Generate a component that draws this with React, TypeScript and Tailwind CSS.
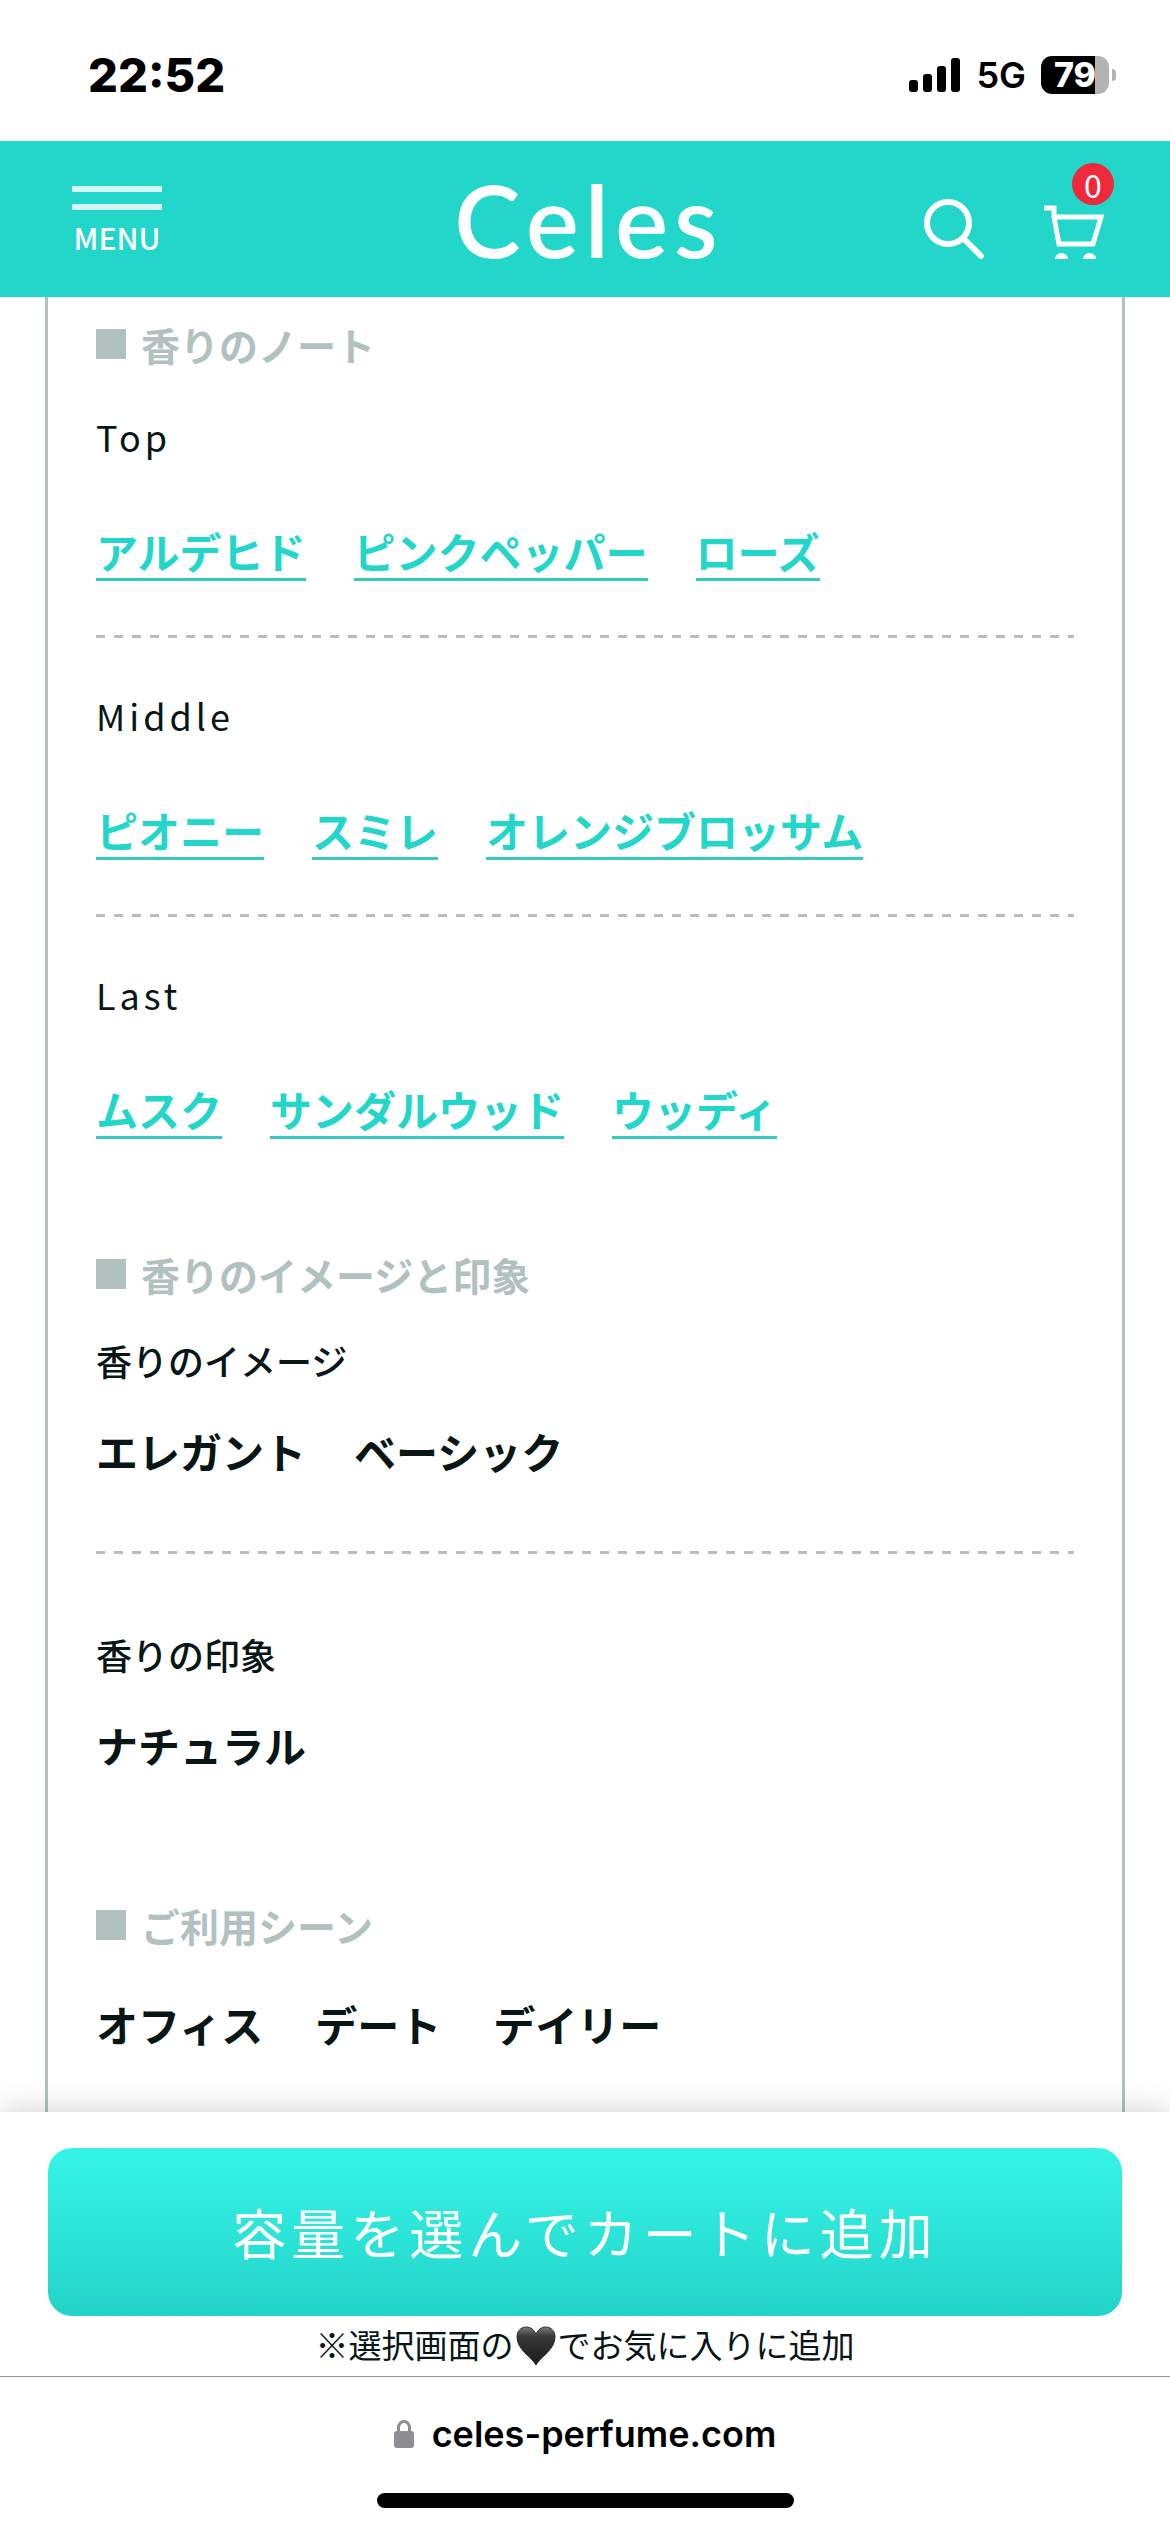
import React from "react";

const notes = [
  { name: "Top", items: ["アルデヒド", "ピンクペッパー", "ローズ"] },
  { name: "Middle", items: ["ピオニー", "スミレ", "オレンジブロッサム"] },
  { name: "Last", items: ["ムスク", "サンダルウッド", "ウッディ"] },
];

function StatusBar() {
  return (
    <div className="flex h-[141px] items-center justify-between pt-2 pl-[88px] pr-[54px] font-[Inter,sans-serif] text-black">
      <span className="text-[47px] leading-none font-extrabold">22:52</span>
      <div className="flex items-center gap-[15px]">
        <svg width="52" height="34" viewBox="0 0 52 34" aria-hidden="true">
          <rect x="0" y="22" width="9" height="12" rx="3" />
          <rect x="14" y="16" width="9" height="18" rx="3" />
          <rect x="28" y="8" width="9" height="26" rx="3" />
          <rect x="42" y="0" width="9" height="34" rx="3" />
        </svg>
        <span className="text-[36px] leading-none font-semibold">5G</span>
        <div className="flex items-center gap-[3px]">
          <div className="flex h-[38px] w-[68px] items-center justify-center rounded-[11px] bg-[linear-gradient(90deg,#000_79%,#b3b3b3_79%)] text-[34px] leading-none font-extrabold text-white">
            79
          </div>
          <div className="h-3 w-1 rounded-r-full bg-[#b3b3b3]" />
        </div>
      </div>
    </div>
  );
}

function Header() {
  return (
    <header className="grid h-[156px] grid-cols-[1fr_auto_1fr] items-center bg-[#22d6ca] pl-[72px] pr-16 text-white">
      <button className="flex w-[90px] flex-col items-center">
        <span className="h-[6px] w-full bg-white/80" />
        <span className="mt-3 h-[6px] w-full bg-white/80" />
        <span className="mt-3 text-[30px] leading-[30px] font-medium">MENU</span>
      </button>
      <a href="#" className="font-[Lato,sans-serif] text-[100px] leading-none font-semibold tracking-[6px]">
        Celes
      </a>
      <div className="flex items-center justify-end gap-[57px] pt-[22px]">
        <button aria-label="検索">
          <svg width="62" height="62" viewBox="0 0 62 62" fill="none" stroke="currentColor" strokeWidth="6" strokeLinecap="round">
            <circle cx="25" cy="24" r="21" />
            <path d="M41 40 58 57" />
          </svg>
        </button>
        <a href="#" aria-label="カート" className="relative">
          <svg width="64" height="62" viewBox="0 0 64 62" fill="none" stroke="currentColor" strokeWidth="5">
            <path d="M2 9h10v9l5 27h34l8-27H12" />
            <path d="M13 60a6.500 6 0 0 1 13 0zM41 60a6.500 6 0 0 1 13 0z" fill="currentColor" stroke="none" />
          </svg>
          <span className="absolute -top-9 -right-2 flex size-[42px] items-center justify-center rounded-full bg-[#f0283c] text-[32px] leading-none">
            0
          </span>
        </a>
      </div>
    </header>
  );
}

function SectionTitle({ children }: { children: React.ReactNode }) {
  return (
    <h2 className="flex items-center gap-[15px] text-[39px] leading-10 font-bold text-[#b1c1bf]">
      <span className="size-[30px] bg-[#b1c1bf]" />
      {children}
    </h2>
  );
}

function Divider() {
  return (
    <div className="h-[3px] bg-[repeating-linear-gradient(90deg,#b5c0be_0_9px,transparent_9px_18px)]" />
  );
}

function Trait({ label, values }: { label: string; values: string[] }) {
  return (
    <div>
      <h3 className="text-[36px] leading-[54px] font-medium">{label}</h3>
      <ul className="mt-[37px] flex gap-12 text-[42px] leading-[54px] font-bold">
        {values.map((value) => (
          <li key={value}>{value}</li>
        ))}
      </ul>
    </div>
  );
}

function CartBar() {
  return (
    <div className="relative bg-white px-12 pt-9 pb-1 text-center shadow-[0_0_30px_rgba(0,0,0,0.2)]">
      <button className="h-[168px] w-full rounded-[24px] bg-linear-to-b from-[#36f4e8] to-[#22d4c8] text-[54px] leading-none font-normal tracking-[5px] text-white">
        容量を選んでカートに追加
      </button>
      <p className="flex items-center justify-center gap-[2px] text-[33px] leading-[56px]">
        ※選択画面の
        <svg className="mt-1" width="40" height="40" viewBox="0 0 40 40" role="img" aria-label="ハート">
          <defs>
            <linearGradient id="heart" x1="0" y1="0" x2="0" y2="1">
              <stop offset="0" stopColor="#7a7a7a" />
              <stop offset="0.25" stopColor="#383838" />
              <stop offset="1" stopColor="#1a1a1a" />
            </linearGradient>
          </defs>
          <path
            d="M20 39C16 31 1 24 1 11 1 5 5 1 10.500 1 15 1 18 4 20 8 22 4 25 1 29.500 1 35 1 39 5 39 11 39 24 24 31 20 39z"
            fill="url(#heart)"
            stroke="#2a2a2a"
          />
        </svg>
        でお気に入りに追加
      </p>
    </div>
  );
}

function BrowserBar() {
  return (
    <div className="relative flex flex-col items-center border-t border-[#999] bg-white pt-[27px] pb-6 font-[Inter,sans-serif] text-black">
      <div className="flex h-[60px] items-center gap-[18px] text-[36px] font-semibold">
        <svg width="20" height="28" viewBox="0 0 20 28" aria-hidden="true">
          <path d="M4.500 13V7.500a5.500 6 0 0 1 11 0V13" fill="none" stroke="#8e8d93" strokeWidth="3" />
          <rect y="11" width="20" height="17" rx="3" fill="#8e8d93" />
        </svg>
        celes-perfume.com
      </div>
      <div className="mt-[29px] h-[15px] w-[417px] rounded-full bg-black" />
    </div>
  );
}

function App() {
  return (
    <div className="flex min-h-screen flex-col bg-white font-['Noto_Sans_CJK_JP',sans-serif] text-[#081616]">
      <StatusBar />
      <Header />
      <main className="mx-[45px] flex-1 border-x-[3px] border-[#b1c1bf] px-12 pt-[27px] pb-[60px]">
        <SectionTitle>香りのノート</SectionTitle>
        <div className="mt-[45px]">
          {notes.map((note, i) => (
            <div key={note.name}>
              {i > 0 && (
                <div className="pt-[54px] pb-[50px]">
                  <Divider />
                </div>
              )}
              <h3 className="text-[36px] leading-[54px] tracking-[4px]">{note.name}</h3>
              <div className="mt-[61px] flex gap-12 text-[42px] leading-[54px] font-bold text-[#22d6ca]">
                {note.items.map((item) => (
                  <a key={item} href="#" className="border-b-[3px] border-[#35cbc0]">
                    {item}
                  </a>
                ))}
              </div>
            </div>
          ))}
        </div>

        <div className="mt-[115px]">
          <SectionTitle>香りのイメージと印象</SectionTitle>
          <div className="mt-[39px] flex flex-col gap-[73px]">
            <Trait label="香りのイメージ" values={["エレガント", "ベーシック"]} />
            <Divider />
            <Trait label="香りの印象" values={["ナチュラル"]} />
          </div>
        </div>

        <div className="mt-[133px]">
          <SectionTitle>ご利用シーン</SectionTitle>
          <ul className="mt-[52px] flex gap-[52px] text-[42px] leading-[54px] font-bold">
            <li>オフィス</li>
            <li>デート</li>
            <li>デイリー</li>
          </ul>
        </div>
      </main>
      <CartBar />
      <BrowserBar />
    </div>
  );
}

export default App;
